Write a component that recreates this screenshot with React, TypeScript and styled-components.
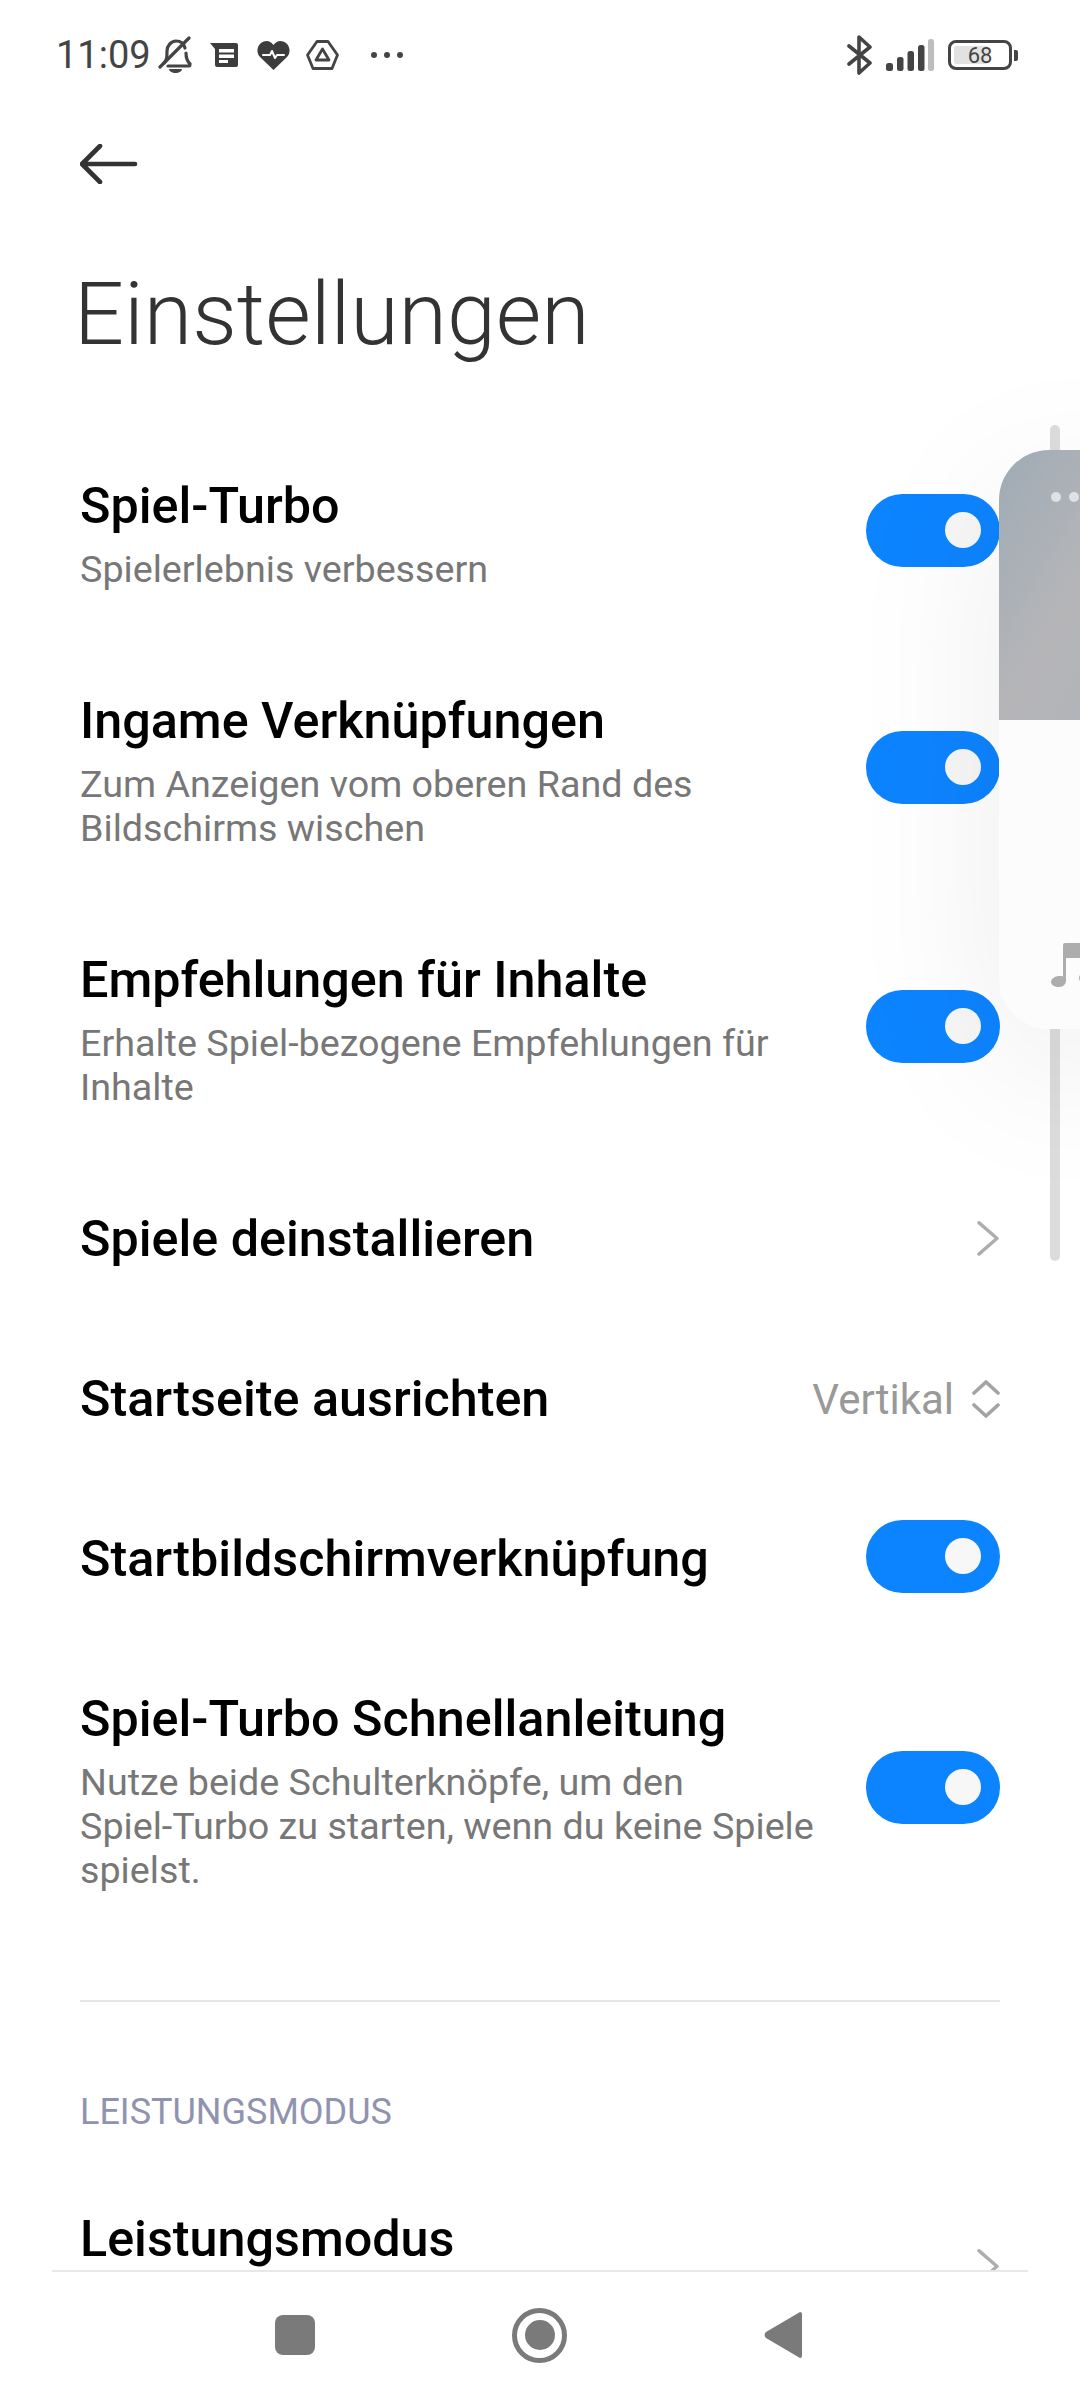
import { FC, ReactNode } from "react";
import styled, { createGlobalStyle } from "styled-components";

const GlobalStyle = createGlobalStyle`
  html, body {
    margin: 0;
    padding: 0;
    background: #fff;
  }
  * {
    box-sizing: border-box;
  }
`;

interface SettingRowProps {
  title: string;
  sub?: ReactNode;
  tall?: boolean;
  children?: ReactNode;
}

const SettingRow: FC<SettingRowProps> = ({ title, sub, tall, children }) => (
  <Row>
    <RowText $tall={tall} $hasSub={!!sub}>
      <RowTitle>{title}</RowTitle>
      {sub && <RowSub>{sub}</RowSub>}
    </RowText>
    {children}
  </Row>
);

const Chevron: FC = () => (
  <svg width="24" height="40" viewBox="0 0 24 40" fill="none">
    <path d="M3 3 L21 20 L3 37" stroke="#adadad" strokeWidth="3.6" strokeLinecap="round" strokeLinejoin="round" transform="translate(0 1) scale(1 .92)" />
  </svg>
);

const App: FC = () => {
  return (
    <Screen>
      <GlobalStyle />
      <StatusBar>
        <StatusLeft>
          <Time>11:09</Time>
          <svg width="34" height="38" viewBox="0 0 34 38" fill="none" style={{ marginLeft: 7 }}>
            <path d="M6 27c3-3 3-6 3-12 0-5 4-10 9-10s8 3 9 7M28 17c0 5 1 8 4 11 0 1 0 2-1 2H10" stroke="#444" strokeWidth="3.2" strokeLinecap="round" />
            <path d="M2 31 31 2" stroke="#444" strokeWidth="3.2" strokeLinecap="round" />
            <path d="M11 33h13c0 2-3 4-6.500 4S11 35 11 33z" fill="#444" />
          </svg>
          <svg width="30" height="26" viewBox="0 0 30 26" style={{ marginLeft: 17 }}>
            <path d="M1 1h26a2 2 0 0 1 2 2v20a2 2 0 0 1-2 2H8a2 2 0 0 1-2-2V7z" fill="#3d3d3d" />
            <path d="M10 7h15v3.500H10zM10 12.500h15V16H10zM10 18h9v3H10z" fill="#fff" />
          </svg>
          <svg width="33" height="30" viewBox="0 0 33 30" style={{ marginLeft: 18 }}>
            <path d="M16.500 30 3 17C-1 13 0 6 4 3c4-3 9-3 12.500 2C20 0 25 0 29 3c4 3 5 10 1 14z" fill="#3d3d3d" />
            <path d="M6 15h7l2-4 3 7 2-3h7" stroke="#fff" strokeWidth="2" fill="none" strokeLinejoin="round" strokeLinecap="round" />
          </svg>
          <svg width="33" height="30" viewBox="0 0 33 30" fill="none" style={{ marginLeft: 16 }}>
            <path d="M11 1.500h11L31.500 15 26 28.500H7L1.500 15z" stroke="#444" strokeWidth="2.800" strokeLinejoin="round" />
            <path d="M16.500 9 23 20H10z" stroke="#444" strokeWidth="2.800" strokeLinejoin="round" />
          </svg>
          <MoreDots>
            <i /><i /><i />
          </MoreDots>
        </StatusLeft>
        <StatusRight>
          <svg width="26" height="40" viewBox="0 0 26 40" fill="none">
            <path d="M2 11 23 28 12 38V2l11 10L2 29" stroke="#444" strokeWidth="3.600" strokeLinecap="round" strokeLinejoin="round" />
          </svg>
          <svg width="48" height="32" viewBox="0 0 48 32" style={{ marginLeft: 13 }}>
            <rect x="0" y="24" width="7" height="8" rx="2.500" fill="#444" />
            <rect x="11" y="18" width="6.500" height="14" rx="2.500" fill="#444" />
            <rect x="21.500" y="12" width="6.500" height="20" rx="2.500" fill="#444" />
            <rect x="32" y="6" width="6.500" height="26" rx="2.500" fill="#444" />
            <rect x="42" y="0" width="6" height="32" rx="2.500" fill="#bdbdbd" />
          </svg>
          <Battery>
            <BatteryLevel />
            <BatteryText>68</BatteryText>
          </Battery>
          <BatteryNub />
        </StatusRight>
      </StatusBar>

      <TopBar>
        <svg width="58" height="40" viewBox="0 0 58 40" fill="none">
          <path d="M55 20H3M20 2 2 20l18 18" stroke="#333" strokeWidth="4.600" strokeLinecap="round" strokeLinejoin="round" />
        </svg>
      </TopBar>

      <PageTitle>Einstellungen</PageTitle>

      <List>
        <SettingRow title="Spiel-Turbo" sub="Spielerlebnis verbessern">
          <Toggle />
        </SettingRow>
        <SettingRow title="Ingame Verknüpfungen" sub={<>Zum Anzeigen vom oberen Rand des<br />Bildschirms wischen</>}>
          <Toggle />
        </SettingRow>
        <SettingRow title="Empfehlungen für Inhalte" sub={<>Erhalte Spiel-bezogene Empfehlungen für<br />Inhalte</>}>
          <Toggle />
        </SettingRow>
        <SettingRow title="Spiele deinstallieren">
          <Chevron />
        </SettingRow>
        <SettingRow title="Startseite ausrichten">
          <ValueGroup>
            <ValueText>Vertikal</ValueText>
            <svg width="28" height="40" viewBox="0 0 28 40" fill="none">
              <path d="M2 14 14 3l12 11M2 26l12 11 12-11" stroke="#a3a3a3" strokeWidth="3.600" strokeLinecap="round" strokeLinejoin="round" />
            </svg>
          </ValueGroup>
        </SettingRow>
        <SettingRow title="Startbildschirmverknüpfung">
          <Toggle />
        </SettingRow>
        <SettingRow title="Spiel-Turbo Schnellanleitung" sub={<>Nutze beide Schulterknöpfe, um den<br />Spiel-Turbo zu starten, wenn du keine Spiele<br />spielst.</>}>
          <Toggle />
        </SettingRow>
      </List>

      <Divider />
      <SectionLabel>LEISTUNGSMODUS</SectionLabel>
      <SettingRow title="Leistungsmodus" tall>
        <Chevron />
      </SettingRow>

      <FloatBar />
      <FloatPanel>
        <PanelTop>
          <PanelDot />
          <PanelDot />
        </PanelTop>
        <PanelBody>
          <svg width="46" height="46" viewBox="0 0 46 46">
            <path d="M14 1h32v15H15v23c0 3-3 6-7 6s-8-2-8-5 4-6 8-6c2 0 3 0 4 .500V3a2 2 0 0 1 2-2z" fill="#adadad" />
            <ellipse cx="36" cy="36" rx="8" ry="6" fill="#adadad" />
          </svg>
        </PanelBody>
      </FloatPanel>

      <NavBar>
        <NavSquare />
        <NavHome>
          <i />
        </NavHome>
        <svg width="38" height="46" viewBox="0 0 38 46">
          <path d="M36 0a2 2 0 0 1 2 2v42a2 2 0 0 1-2 2L2 26a4 4 0 0 1 0-6z" fill="#7a7a7a" />
        </svg>
      </NavBar>
    </Screen>
  );
};

export default App;

// стили
const Screen = styled.div`
  width: 1080px;
  height: 2400px;
  position: relative;
  overflow: hidden;
  background: #fff;
  font-family: Roboto, "Noto Sans", sans-serif;
`;

const StatusBar = styled.div`
  height: 110px;
  padding: 0 62px 0 56px;
  display: flex;
  align-items: center;
  justify-content: space-between;
`;

const StatusLeft = styled.div`
  display: flex;
  align-items: center;
`;

const Time = styled.span`
  font-size: 38px;
  color: #444;
`;

const MoreDots = styled.div`
  margin-left: 32px;
  display: flex;
  gap: 7px;

  i {
    width: 6px;
    height: 6px;
    border-radius: 50%;
    background: #444;
  }
`;

const StatusRight = styled.div`
  display: flex;
  align-items: center;
`;

const Battery = styled.div`
  margin-left: 14px;
  width: 64px;
  height: 30px;
  border: 3px solid #444;
  border-radius: 8px;
  position: relative;
  display: flex;
  align-items: center;
  justify-content: center;
`;

const BatteryLevel = styled.div`
  position: absolute;
  left: 3px;
  top: 3px;
  bottom: 3px;
  width: 34px;
  background: #e2e2e2;
  border-radius: 2px;
`;

const BatteryText = styled.span`
  position: relative;
  font-size: 22px;
  color: #444;
`;

const BatteryNub = styled.div`
  margin-left: 2px;
  width: 4px;
  height: 11px;
  background: #444;
  border-radius: 0 2px 2px 0;
`;

const TopBar = styled.div`
  height: 108px;
  padding-left: 80px;
  display: flex;
  align-items: center;
`;

const PageTitle = styled.h1`
  margin: 46px 0 62px 74px;
  font-size: 88px;
  line-height: 100px;
  font-weight: 300;
  color: #333;
`;

const List = styled.div`
  display: flex;
  flex-direction: column;
`;

const Row = styled.div`
  padding: 0 80px;
  display: flex;
  align-items: center;
  justify-content: space-between;
`;

const RowText = styled.div<{ $tall?: boolean; $hasSub?: boolean }>`
  padding: 52px 0 ${(p) => (p.$hasSub ? "50px" : "52px")};
  display: flex;
  flex-direction: column;
  gap: 13px;
  min-height: ${(p) => (p.$tall ? "216px" : "auto")};
`;

const RowTitle = styled.div`
  font-size: 50.3px;
  line-height: 56px;
  font-weight: 500;
  color: #000;
`;

const RowSub = styled.div`
  font-size: 37.7px;
  line-height: 44px;
  color: #777;
`;

const Toggle = styled.div`
  flex: none;
  width: 134px;
  height: 73px;
  margin-bottom: 6px;
  border-radius: 37px;
  background: #0d84ff;
  position: relative;

  &::after {
    content: "";
    position: absolute;
    top: 18px;
    right: 19px;
    width: 36px;
    height: 36px;
    border-radius: 50%;
    background: #f7f7f7;
  }
`;

const ValueGroup = styled.div`
  display: flex;
  align-items: center;
  gap: 18px;
`;

const ValueText = styled.span`
  font-size: 42px;
  color: #999;
`;

const Divider = styled.div`
  margin: 58px 80px 0;
  height: 2px;
  background: #e6e6e6;
`;

const SectionLabel = styled.div`
  margin: 90px 0 27px 80px;
  font-size: 36px;
  line-height: 40px;
  color: #9093b0;
`;

const FloatBar = styled.div`
  position: absolute;
  left: 1050px;
  top: 425px;
  width: 10px;
  height: 836px;
  border-radius: 5px;
  background: #dcdcdc;
`;

const FloatPanel = styled.div`
  position: absolute;
  left: 999px;
  top: 450px;
  width: 160px;
  height: 579px;
  border-radius: 50px;
  overflow: hidden;
  background: #fcfcfc;
  box-shadow: 0 40px 160px rgba(0, 0, 0, 0.08);
  display: flex;
  flex-direction: column;
`;

const PanelTop = styled.div`
  height: 270px;
  flex: none;
  padding: 42px 0 0 52px;
  display: flex;
  gap: 8px;
  background: linear-gradient(120deg, #9fabb5, #b5b5b8 50%, #aeb2b8);
`;

const PanelDot = styled.div`
  width: 10px;
  height: 10px;
  border-radius: 50%;
  background: #dfe1e3;
`;

const PanelBody = styled.div`
  padding: 222px 0 0 52px;
`;

const NavBar = styled.div`
  position: absolute;
  left: 0;
  right: 0;
  top: 2270px;
  bottom: 0;
  background: #fff;
  display: flex;
  align-items: center;
  justify-content: center;
  gap: 197px;
  padding-right: 3px;

  &::before {
    content: "";
    position: absolute;
    top: 0;
    left: 52px;
    right: 52px;
    height: 2px;
    background: #e8e8e8;
  }
`;

const NavSquare = styled.div`
  width: 40px;
  height: 40px;
  border-radius: 8px;
  background: #7a7a7a;
`;

const NavHome = styled.div`
  width: 55px;
  height: 55px;
  border-radius: 50%;
  border: 5px solid #7a7a7a;
  display: flex;
  align-items: center;
  justify-content: center;

  i {
    width: 30px;
    height: 30px;
    border-radius: 50%;
    background: #7a7a7a;
  }
`;
